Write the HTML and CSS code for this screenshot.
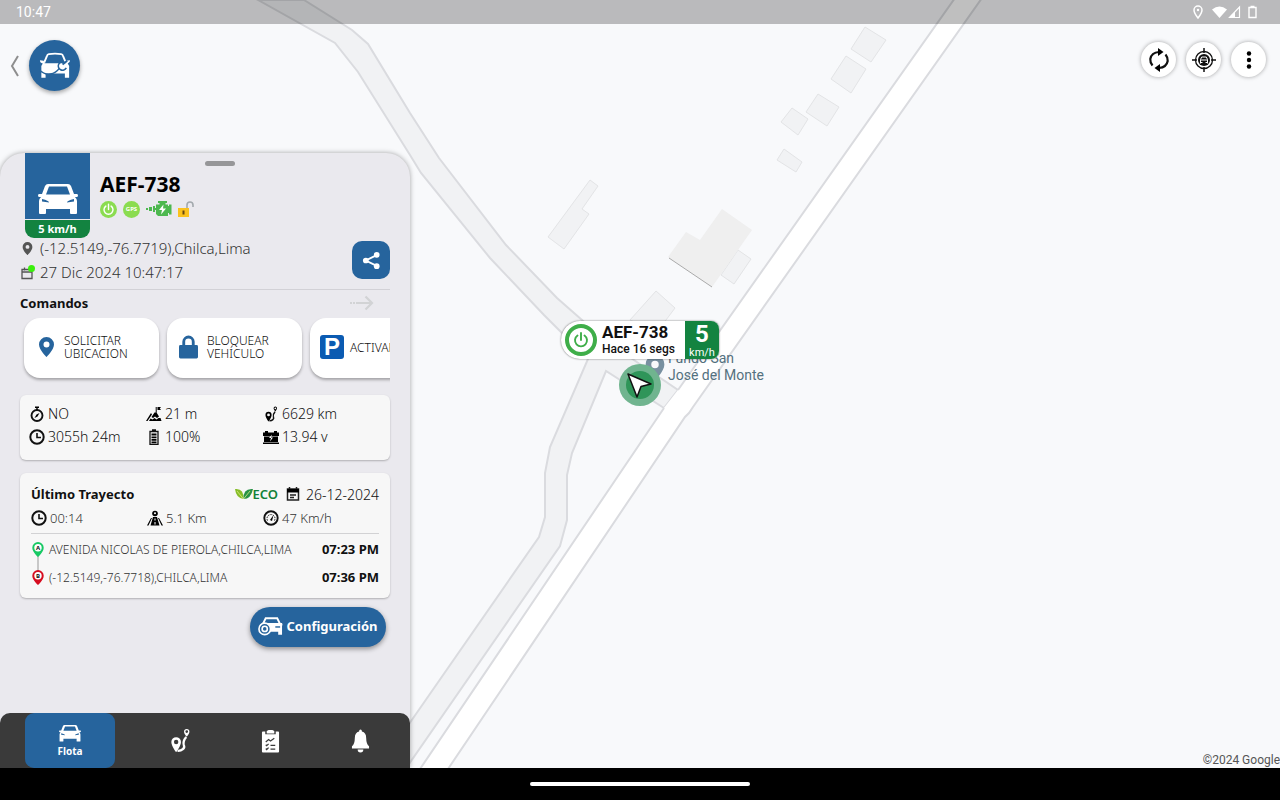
FILE: index.html
```html
<!DOCTYPE html>
<html lang="es">
<head>
<meta charset="utf-8">
<meta name="viewport" content="width=device-width, initial-scale=1">
<title>Flota</title>
<link rel="stylesheet" href="styles.css">
</head>
<body>
<svg class="defs" aria-hidden="true">
  <symbol id="pin" viewBox="0 0 16 20"><path fill-rule="evenodd" d="M8 0a7.500 7.500 0 0 0-7.500 7.500C.5 13 8 20 8 20s7.500-7 7.500-12.500A7.500 7.500 0 0 0 8 0zm0 4.500a3 3 0 1 1 0 6 3 3 0 0 1 0-6z"/></symbol>
  <symbol id="car" viewBox="0 0 40 31"><path fill-rule="evenodd" d="M10 1h20q2 0 3 2l3 8h3q1 0 1 1.500T38.500 14H37q2 2 2 4v12q0 1-1 1h-5q-1 0-1-1v-4H8v4q0 1-1 1H2q-1 0-1-1V18q0-2 2-4H1.500Q0 14 0 12.500T1 11h3l3-8q1-2 3-2zm1 2.500L8 11.500h24l-3-8zM4 16v2.500l7 1q0-2-7-3.500zm32 0q-7 1.500-7 3.500l7-1z"/></symbol>
  <symbol id="clock" viewBox="0 0 16 16"><circle cx="8" cy="8" r="6.700" fill="none" stroke="currentColor" stroke-width="2"/><path d="M8 4v4.500h4" fill="none" stroke="currentColor" stroke-width="1.600"/></symbol>
  <symbol id="power" viewBox="0 0 20 20"><path d="M6.500 5.500a6 6 0 1 0 7 0M10 3v7" fill="none" stroke="currentColor" stroke-width="1.900" stroke-linecap="round"/></symbol>
  <symbol id="route" viewBox="0 0 20 26"><path fill-rule="evenodd" d="M6 9.500a5 5 0 0 0-5 5C1 18 5.500 25 6 25s5-7 5-10.500a5 5 0 0 0-5-5zm0 2.700a2.300 2.300 0 1 1 0 4.600 2.300 2.300 0 0 1 0-4.600z"/><path d="M7.500 23.800c4.500.2 8-2.800 6.500-6-1-3-.5-5 2.500-8.500" fill="none" stroke="currentColor" stroke-width="2.400"/><path fill-rule="evenodd" d="M17 1a2.800 2.800 0 0 0-2.800 2.800C14.200 6 17 9 17 9s2.800-3 2.800-5.200A2.800 2.800 0 0 0 17 1zm0 1.300a1.400 1.400 0 1 1 0 2.800 1.400 1.400 0 0 1 0-2.800z"/></symbol>
</svg>

<div class="screen">
  <main class="stage">
    <svg class="map" viewBox="0 0 1280 768" preserveAspectRatio="xMidYMid slice" aria-hidden="true">
      <rect width="1280" height="768" fill="#f8f9fb"/>
      <g fill="#f1f2f4" stroke="#e3e4e6">
        <path d="M865 27l21 13-15 22-20-13zM846 56l20 13-15 24-20-14zM818 94l21 13-12 19-21-14zM792 108l16 11-10 16-17-13zM784 149l18 13-6 10-19-12z"/>
        <path d="M590 180l8 6-16 23 7 5-25 35-16-12zM738 250l13 9-17 25-13-9zM656 291l19 17-18 24-27-12z"/>
      </g>
      <path d="M722 209l30 21-40 57-44-30 18-25 14 8z" fill="#efefef"/>
      <path d="M669 258l43 29" stroke="#aaa"/>
      <path d="M258 0L335 43 358 72 410 155 421 173 490 258 544 315 588 359 550 447 545 473V517L539 537 400 737V777L560 546 567 520V475L572 453 606 371 664 408 678 390 600 337 582 320 557 298 506 245 439 158 410 113 368 44 352 30 304 0Z" fill="#f1f2f4" stroke="#dadbdf" stroke-width="2"/>
      <path d="M955-2L678 390 664 408 418 772H446L685 417 689 413 693 407 982-2Z" fill="#fff"/>
      <path d="M955-2L678 390M664 408L418 772M446 772L685 417 689 413 693 407 982-2" fill="none" stroke="#dadbdf" stroke-width="2"/>
    </svg>

    <div class="place">
      <svg class="place-pin"><use href="#pin"/></svg>
      <span>Fundo San<br>José del Monte</span>
    </div>
    <div class="vehicle-dot">
      <svg viewBox="0 0 42 42"><circle cx="21" cy="21" r="21" fill="#70b48f"/><circle cx="21" cy="21" r="14" fill="#2f9559"/><path d="M9 10l23 10-10 2.500-4 10.500z" fill="#fff" stroke="#111" stroke-width="1.500" stroke-linejoin="round"/></svg>
    </div>
    <div class="vehicle-tag">
      <span class="tag-power"><svg><use href="#power"/></svg></span>
      <span class="tag-text"><b>AEF-738</b><span>Hace 16 segs</span></span>
      <span class="tag-speed"><b>5</b><span>km/h</span></span>
    </div>
    <div class="credit">©2024 Google</div>

    <div class="overlay">
      <header class="status">
        <time>10:47</time>
        <svg class="status-icons" viewBox="0 0 66 16" fill="none" stroke="#fff" stroke-width="1.500">
          <path d="M6 2a4 4 0 0 0-4 4c0 3 4 8 4 8s4-5 4-8a4 4 0 0 0-4-4z"/><circle cx="6" cy="6" r="1.200" fill="#fff" stroke="none"/>
          <path d="M20 5.500Q27.500-.5 35 5.500L27.500 14z" fill="#fff" stroke="none"/>
          <path d="M37.500 13.500L47.500 3v10.500z" stroke-width="1.200"/><path d="M37 14l6-6v6z" fill="#fff" stroke="none"/>
          <path d="M57 3.500h7v10h-7zM58.500 2.500h4" stroke-width="1.400"/>
        </svg>
      </header>
      <div class="toolbar">
        <div class="toolbar-left">
          <button class="back" aria-label="Atrás"><svg viewBox="0 0 10 22"><path d="M8 1L2 11l6 10" fill="none" stroke="#8e8e8e" stroke-width="2"/></svg></button>
          <button class="brand" aria-label="Vehículos">
            <svg viewBox="0 0 34 28"><path d="M5.500 11L8.500 3.700Q9 2.200 10.500 1.900 17 .8 23.500 1.900q1.500.3 2 1.800L28.500 11" fill="none" stroke="#fff" stroke-width="2"/><path d="M1 8.500l4 .5 1 2.500h22l1-2.500 4-.5q0 3-2.500 3.300 2 2 1.500 5.200v10h-4.500v-4.500H7V27H2.500V17q-.5-3 1.500-5.200Q1 11.500 1 8.500z" fill="#fff"/><path d="M0 18.500q6 5.500 12 4.500 6-1 9.500-6" fill="none" stroke="#26649d" stroke-width="1.500"/><path d="M27 10.500a4.500 4.500 0 1 0 2 6" fill="none" stroke="#26649d" stroke-width="1.600"/><path d="M25 13l5-4" stroke="#26649d" stroke-width="2"/></svg>
          </button>
        </div>
        <div class="toolbar-right">
          <button class="round" aria-label="Actualizar"><svg viewBox="0 0 24 24"><path d="M5.500 17.500Q3 14.500 3.300 11 4.500 4.500 12 4M18.500 6.500q2.500 3 2.200 6.500-1.200 6.500-8.700 7" fill="none" stroke="#111" stroke-width="2.200"/><path d="M11 0l5.500 4-5.500 4zM13 16l-5.500 4 5.500 4z"/></svg></button>
          <button class="round" aria-label="Centrar vehículo"><svg viewBox="0 0 24 24" fill="none" stroke="#111"><circle cx="12" cy="12" r="8.500" stroke-width="1.300"/><path d="M12 0v5M12 19v5M0 12h5M19 12h5" stroke-width="1.500"/><circle cx="12" cy="12" r="6" fill="#111" stroke="none"/><path d="M8.500 15.500v-4l1.200-2.500h4.600l1.200 2.500v4M8.500 12h7M9 14.500h1.500M13.500 14.500H15" stroke="#fff"/></svg></button>
          <button class="round" aria-label="Más opciones"><svg viewBox="0 0 24 24"><circle cx="12" cy="5.500" r="2.200"/><circle cx="12" cy="12" r="2.200"/><circle cx="12" cy="18.500" r="2.200"/></svg></button>
        </div>
      </div>

      <div class="side">
        <section class="panel">
          <span class="handle"></span>
          <div class="head">
            <div class="tile">
              <div class="tile-car"><svg><use href="#car"/></svg></div>
              <div class="tile-speed">5 km/h</div>
            </div>
            <div class="head-text">
              <h1>AEF-738</h1>
              <div class="badges">
                <span class="badge"><svg><use href="#power"/></svg></span>
                <span class="badge gps">GPS</span>
                <svg class="engine" viewBox="0 0 26 16"><path d="M0 7h2v2H0zM3 6h3v4H3zM7 5h2v6H7z" fill="#4db84f"/><path d="M10 3.500h3.500V2H12V0h9v2h-1.500v1.500H22V5h1V3.500h2.500v10H23V12h-1v3H12l-2-2zM8 7h2v2H8z" fill="#4db84f"/><path d="M17.500 3.500l-4.500 5.500h3l-1 4.500L20 7.500h-3z" fill="#fff"/></svg>
                <svg class="unlock" viewBox="0 0 16 18"><path d="M9 8V5a3 3 0 0 1 6 0v2" fill="none" stroke="#a3a9ad" stroke-width="1.600"/><path d="M0 8h11v9H0z" fill="#fbc21e"/><path d="M5.500 10.500v4" stroke="#664712" stroke-width="2"/></svg>
              </div>
            </div>
          </div>
          <div class="where">
            <div class="where-lines">
              <p><svg class="w-pin"><use href="#pin"/></svg>(-12.5149,-76.7719),Chilca,Lima</p>
              <p><svg class="w-cal" viewBox="0 0 15 15"><path d="M2 4.500h10v9H2zM2 7h10M4.500 2.500v3" fill="none" stroke="#555" stroke-width="1.300"/><circle cx="11.500" cy="3.500" r="3.500" fill="#3bf00c"/></svg>27 Dic 2024 10:47:17</p>
            </div>
            <button class="share" aria-label="Compartir"><svg viewBox="0 0 20 20"><path d="M16 4L4 10l12 6" fill="none" stroke="#fff" stroke-width="2"/><g fill="#fff"><circle cx="15.500" cy="4" r="3"/><circle cx="4" cy="10" r="3"/><circle cx="15.500" cy="16" r="3"/></g></svg></button>
          </div>

          <div class="section-title">
            <h2>Comandos</h2>
            <svg viewBox="0 0 24 16"><path d="M0 8h2M3 8h2M6 8h16M15.500 1.500L22 8l-6.500 6.500" fill="none" stroke="#d2d3d5" stroke-width="2.200"/></svg>
          </div>
          <div class="commands">
            <button class="command"><svg class="c-pin"><use href="#pin"/></svg><span>SOLICITAR<br>UBICACION</span></button>
            <button class="command"><svg class="c-lock" viewBox="0 0 20 24"><path d="M5 11V6.500a5 5 0 0 1 10 0V11" fill="none" stroke="#26649d" stroke-width="3"/><rect y="10" width="20" height="14" rx="1.500" fill="#26649d"/></svg><span>BLOQUEAR<br>VEHÍCULO</span></button>
            <button class="command"><span class="parking">P</span><span>ACTIVAR</span></button>
          </div>

          <div class="card stats">
            <span><svg viewBox="0 0 16 16"><circle cx="8" cy="9.500" r="5.500" fill="none" stroke="#111" stroke-width="1.900"/><path d="M6 .5h4V2H6zM7.300 1h1.400v3H7.300zM5.500 12l2-3.500L10.500 7l-2 3.500z"/></svg>NO</span>
            <span><svg viewBox="0 0 16 16"><path d="M0 15h1.500L6 8.500 5 7zM3 15l1.500-2.500 2 1 2-1.500 2 1.500 2-1.500L14.500 12l1 3zM5.500 11L8.500 6.500h2L13 10.500l-2 1.500-2-1.500-2 1.500zM9.700 1h1v6h-1zM11.500 1H15l-1.200 1.500L15 4h-3.500z"/></svg>21 m</span>
            <span><svg class="i-route"><use href="#route"/></svg>6629 km</span>
            <span><svg><use href="#clock"/></svg>3055h 24m</span>
            <span><svg viewBox="0 0 16 16"><path d="M4 2.500h8v13H4zM6 1h4" fill="none" stroke="#111" stroke-width="1.300"/><path d="M5.500 4.500h5v2h-5zM5.500 7.500h5v1.700h-5zM5.500 10h5v1.700h-5zM5.500 12.500h5v1.700h-5z"/></svg>100%</span>
            <span><svg viewBox="0 0 16 16"><path d="M2 2h3v1.500h6V2h3v1.500h2V7H0V3.500h2zM1 7.500h14V13H1zM0 13.500h16V15H0z"/><path d="M9 5.500L6 9h2l-1 3.500 3-4H8z" fill="#fff"/></svg>13.94 v</span>
          </div>

          <div class="card trip">
            <div class="trip-head">
              <h2>Último Trayecto</h2>
              <span class="eco"><svg viewBox="0 0 18 12"><path d="M0 1q9-1 8.500 10Q1 10 0 1z" fill="#86bd28"/><path d="M18 1q-10-1-9.500 10Q16 11 18 1z" fill="#289246"/><path d="M2 3l6.500 8L15 3" fill="none" stroke="#ddea84" stroke-width=".8"/></svg>ECO</span>
              <span class="date"><svg viewBox="0 0 16 16"><path d="M2.500 3h11v11h-11zM4.500 1v3M11.500 1v3M5 9h6M5 11.500h4" fill="none" stroke="#222" stroke-width="1.500"/><path d="M2 3h12v3.500H2z"/></svg>26-12-2024</span>
            </div>
            <div class="trip-data">
              <span><svg><use href="#clock"/></svg>00:14</span>
              <span><svg viewBox="0 0 16 16"><path d="M0 15.500L4 8h1L1.500 15.500zM16 15.500L12 8h-1l3.500 7.500zM6 7h4l2.500 8.500h-9z"/><circle cx="8" cy="3.500" r="2.800"/><circle cx="8" cy="3.300" r="1" fill="#fff"/><path d="M8 8.500v2M8 12v2.500" stroke="#fff"/></svg>5.1 Km</span>
              <span><svg viewBox="0 0 16 16"><circle cx="8" cy="8" r="6.700" fill="none" stroke="#111" stroke-width="1.900"/><path d="M4.500 10.500a4 4 0 1 1 7 0" fill="none" stroke="#111" stroke-dasharray="1.500 1"/><path d="M7 10l3.500-5L9 11z"/></svg>47 Km/h</span>
            </div>
            <ul class="stops">
              <li><svg class="stop" viewBox="0 0 12 43"><path d="M6 14v15" stroke="#999"/><path d="M6 0a5.700 5.700 0 0 0-5.700 5.700C.3 10 6 15 6 15s5.700-5 5.700-9.300A5.700 5.700 0 0 0 6 0z" fill="#17c964"/><circle cx="6" cy="5.700" r="3.700" fill="#fff"/><text x="6" y="8">A</text></svg><span>AVENIDA NICOLAS DE PIEROLA,CHILCA,LIMA</span><time>07:23 PM</time></li>
              <li><svg class="stop" viewBox="0 0 12 43"><path d="M6 0a5.700 5.700 0 0 0-5.700 5.700C.3 10 6 15 6 15s5.700-5 5.700-9.300A5.700 5.700 0 0 0 6 0z" fill="#d60d20"/><circle cx="6" cy="5.700" r="3.700" fill="#fff"/><text x="6" y="8">B</text></svg><span>(-12.5149,-76.7718),CHILCA,LIMA</span><time>07:36 PM</time></li>
            </ul>
          </div>
          <button class="config"><svg viewBox="0 0 26 20"><path d="M5 8l3-6h12l3 6" fill="none" stroke="#fff" stroke-width="2"/><path d="M4 7h21q1 2 0 3v9h-4v-3h-9L4 10z" fill="#fff"/><circle cx="7" cy="13" r="6" fill="#26649d" stroke="#fff" stroke-width="1.700"/><circle cx="7" cy="13" r="2.700" fill="none" stroke="#fff" stroke-width="1.700"/><path d="M18 11h5" stroke="#26649d" stroke-width="1.500"/></svg>Configuración</button>
        </section>

        <nav class="tabs">
          <a class="tab active" href="#flota"><svg class="t-car"><use href="#car"/></svg>Flota</a>
          <a class="tab" href="#rutas" aria-label="Rutas"><svg class="t-route"><use href="#route"/></svg></a>
          <a class="tab" href="#reportes" aria-label="Reportes"><svg class="t-icon" viewBox="0 0 20 24"><path d="M2 2h2.500v3h11V2H18q1 0 1 1v20q0 1-1 1H2q-1 0-1-1V3q0-1 1-1zM6 4V1.500L8 .5h4l2 1V4z"/><path d="M5 13l3-2.500 2 1.500 4-3M5 16l1 1 2-2M5 20l1 1 2-2M10 16.500h5M10 20.500h5" fill="none" stroke="#3a3a3a" stroke-width="1.300"/></svg></a>
          <a class="tab" href="#alertas" aria-label="Alertas"><svg class="t-icon" viewBox="0 0 20 24"><path d="M10 0q1.500 0 1.500 2Q16 3 16 9q0 6 3 8.500V20H1v-2.500Q4 15 4 9q0-6 4.500-7Q8.500 0 10 0zM7 21h6q0 3-3 3t-3-3z"/></svg></a>
        </nav>
      </div>
    </div>
  </main>
  <footer class="system"><span></span></footer>
</div>
</body>
</html>
```

FILE: styles.css
```css
* { box-sizing: border-box; }
body { margin: 0; font-family: "Noto Sans", sans-serif; color: #111; }
h1, h2, p, ul { margin: 0; padding: 0; }
button { border: 0; padding: 0; font: inherit; color: inherit; cursor: pointer; }
a { color: inherit; text-decoration: none; }
svg { flex: none; display: block; }
.defs { position: absolute; width: 0; height: 0; }

.screen { min-height: 100vh; display: flex; flex-direction: column; background: #000; }
.stage { position: relative; flex: 1; display: flex; overflow: hidden; }
.map { position: absolute; inset: 0; width: 100%; height: 100%; }
.overlay { position: relative; flex: 1; display: flex; flex-direction: column; }

.status { height: 24px; padding: 0 21px 0 16px; display: flex; align-items: center; justify-content: space-between; background: rgba(0, 0, 0, .25); color: #fff; font: 14px/24px Roboto, sans-serif; }
.status-icons { width: 68px; height: 16px; }

.toolbar { height: 129px; padding: 16px 14px 0 10px; display: flex; justify-content: space-between; align-items: flex-start; }
.toolbar-left, .toolbar-right { display: flex; align-items: center; }
.toolbar-left { gap: 9px; }
.toolbar-right { gap: 10px; padding-top: 2px; }
.back { background: none; }
.back svg { width: 10px; height: 22px; }
.brand { width: 51px; height: 51px; border-radius: 50%; background: #26649d; display: grid; place-items: center; box-shadow: 0 2px 4px rgba(0, 0, 0, .35); }
.brand svg { width: 32px; height: 27px; }
.round { width: 35px; height: 35px; border-radius: 50%; background: #fff; display: grid; place-items: center; box-shadow: 0 0 4px rgba(0, 0, 0, .35); }
.round svg { width: 24px; height: 24px; }

.side { width: 410px; max-width: 100%; flex: 1; display: flex; flex-direction: column; background: #eae9ee; border-radius: 24px 24px 0 0; box-shadow: 0 0 5px rgba(0, 0, 0, .35); }
.panel { position: relative; flex: 1; padding: 0 20px 16px; display: flex; flex-direction: column; }
.handle { position: absolute; top: 8px; left: 50%; width: 30px; height: 5px; border-radius: 3px; background: #969698; }

.head { display: flex; gap: 10px; padding-left: 5px; }
.tile { width: 65px; border-radius: 0 0 9px 9px; overflow: hidden; color: #fff; }
.tile-car { height: 66px; padding-bottom: 5px; background: #26649d; display: flex; align-items: flex-end; justify-content: center; }
.tile-car svg { width: 40px; height: 31px; fill: #fff; }
.tile-speed { margin-top: 1px; height: 18px; background: #138340; font-size: 11px; line-height: 17px; font-weight: 700; text-align: center; }
.head-text { padding-top: 19px; }
h1 { font-size: 21px; line-height: 24px; font-weight: 700; color: #000; }
.badges { display: flex; align-items: center; gap: 6px; margin-top: 4px; }
.badge { width: 17px; height: 17px; border-radius: 50%; background: #8bdc50; color: #fff; display: grid; place-items: center; }
.badge svg { width: 15px; height: 15px; }
.gps { font-size: 6px; font-weight: 700; }
.engine { width: 26px; height: 16px; }
.unlock { width: 16px; height: 18px; }

.where { display: flex; justify-content: space-between; align-items: center; height: 52px; padding-bottom: 7px; border-bottom: 1px solid #d2d1d6; }
.where p { display: flex; align-items: center; height: 24px; gap: 5px; font-size: 15px; font-weight: 300; color: #333; }
.w-pin, .w-cal { width: 15px; height: 13px; fill: #555; }
.w-cal { height: 15px; }
.share { width: 38px; height: 38px; border-radius: 10px; background: #26649d; display: grid; place-items: center; }
.share svg { width: 19px; height: 19px; }

.section-title { display: flex; align-items: center; justify-content: space-between; height: 28px; padding: 0 16px 2px 0; }
.section-title svg { width: 24px; height: 16px; }
h2 { font-size: 13px; line-height: 20px; font-weight: 700; color: #111; }
.commands { display: flex; gap: 8px; height: 72px; padding: 0 4px 12px; overflow: hidden; }
.command { flex: none; width: 135px; height: 60px; padding: 0 14px 2px; border-radius: 16px; background: #fff; display: flex; align-items: center; gap: 9px; text-align: left; font-size: 12px; line-height: 13px; font-weight: 300; color: #111; box-shadow: 0 2px 3px rgba(0, 0, 0, .3); }
.command:nth-child(2) { padding-left: 12px; }
.command:last-child { padding-left: 10px; gap: 6px; }
.command span { white-space: nowrap; }
.c-pin { width: 17px; height: 20px; fill: #26649d; }
.c-lock { width: 19px; height: 24px; }
.command .parking { width: 24px; height: 24px; border-radius: 3px; background: #0b5bb2; color: #fff; font: 700 24px/24px "Liberation Sans", sans-serif; text-align: center; }

.card { border-radius: 6px; background: #f7f7f7; box-shadow: 0 1px 2px rgba(0, 0, 0, .25); }
.card svg { width: 16px; height: 16px; }
.stats { margin-top: 5px; height: 65px; padding: 7px 0 12px 9px; display: grid; grid-template-columns: 117px 117px 1fr; grid-template-rows: 23px 23px; font-size: 14px; font-weight: 300; color: #111; }
.stats span, .trip-data span { display: flex; align-items: center; gap: 3px; }
.stats svg, .trip-data svg { color: #111; }
.trip { margin-top: 13px; padding: 9px 11px 7px; }
.trip-head { display: flex; align-items: center; height: 24px; }
.eco { margin-left: auto; display: flex; align-items: center; font-size: 13px; font-weight: 600; color: #128139; }
.card .eco svg { width: 18px; height: 12px; }
.date { margin-left: 7px; display: flex; align-items: center; gap: 5px; font-size: 14px; font-weight: 300; color: #111; }
.trip-data { display: grid; grid-template-columns: 116px 116px 1fr; height: 28px; padding-bottom: 4px; font-size: 13px; font-weight: 300; color: #333; border-bottom: 1px solid #d2d2d4; }
.stops { list-style: none; padding-top: 1px; }
.stops li { display: flex; align-items: center; height: 28px; font-size: 12px; font-weight: 300; color: #333; }
.stops span { flex: 1; white-space: nowrap; }
.card .stop { align-self: flex-start; width: 12px; height: 43px; margin: 7px 5px -22px 1px; }
.stop text { font-size: 6px; font-weight: 700; text-anchor: middle; fill: #111; }
.stops time { font-size: 13px; font-weight: 700; color: #111; }
.config { align-self: flex-end; margin: 9px 4px 0 0; width: 136px; height: 40px; padding-bottom: 2px; border-radius: 20px; background: #26649d; color: #fff; display: flex; align-items: center; justify-content: center; gap: 3px; font-size: 13px; font-weight: 700; box-shadow: 0 2px 5px rgba(0, 0, 0, .4); }
.config svg { width: 25px; height: 20px; }

.tabs { height: 55px; padding: 0 5px 0 25px; display: flex; background: #3a3a3a; border-radius: 10px 10px 0 0; color: #fff; }
.tab { width: 90px; display: flex; flex-direction: column; align-items: center; justify-content: center; font-size: 10px; line-height: 14px; font-weight: 700; }
.active { margin-right: 20px; background: #26649d; border-radius: 9px; }
.tab svg { fill: #fff; }
.t-car { width: 22px; height: 18px; margin-bottom: 2px; }
.t-route { width: 20px; height: 25px; }
.t-icon { width: 19px; height: 24px; }

.place, .vehicle-dot, .vehicle-tag { position: absolute; left: 50%; top: 50%; }
.place { margin: -34px 0 0 5px; display: flex; gap: 3px; color: #54717f; font: 14px/17px Roboto, sans-serif; }
.place-pin { width: 20px; height: 27px; margin-top: 4px; fill: #7890a0; }
.vehicle-dot { margin: -20px 0 0 -21px; width: 42px; height: 42px; }
.vehicle-tag { margin: -63px 0 0 -79px; width: 158px; height: 38px; display: flex; align-items: center; background: #fff; border-radius: 19px 8px 8px 19px; box-shadow: 0 0 2px rgba(0, 0, 0, .6); overflow: hidden; font-family: Roboto, sans-serif; color: #111; }
.tag-power { width: 32px; height: 32px; margin: 0 5px 0 4px; border: 4px solid #3fae49; border-radius: 50%; color: #3fae49; display: grid; place-items: center; }
.tag-power svg { width: 20px; height: 20px; }
.tag-text { flex: 1; display: flex; flex-direction: column; font-size: 12px; line-height: 17px; font-weight: 500; white-space: nowrap; }
.tag-text b { font-size: 17px; line-height: 18px; }
.tag-speed { width: 34px; height: 38px; background: #138340; color: #fff; display: flex; flex-direction: column; align-items: center; font-size: 11px; line-height: 12px; }
.tag-speed b { font-size: 24px; line-height: 26px; }
.credit { position: absolute; right: 0; bottom: 1px; font: 12px/14px Roboto, sans-serif; color: #555; }

.system { height: 32px; display: grid; place-items: center; background: #000; }
.system span { width: 220px; height: 4px; border-radius: 2px; background: #fff; }
```
